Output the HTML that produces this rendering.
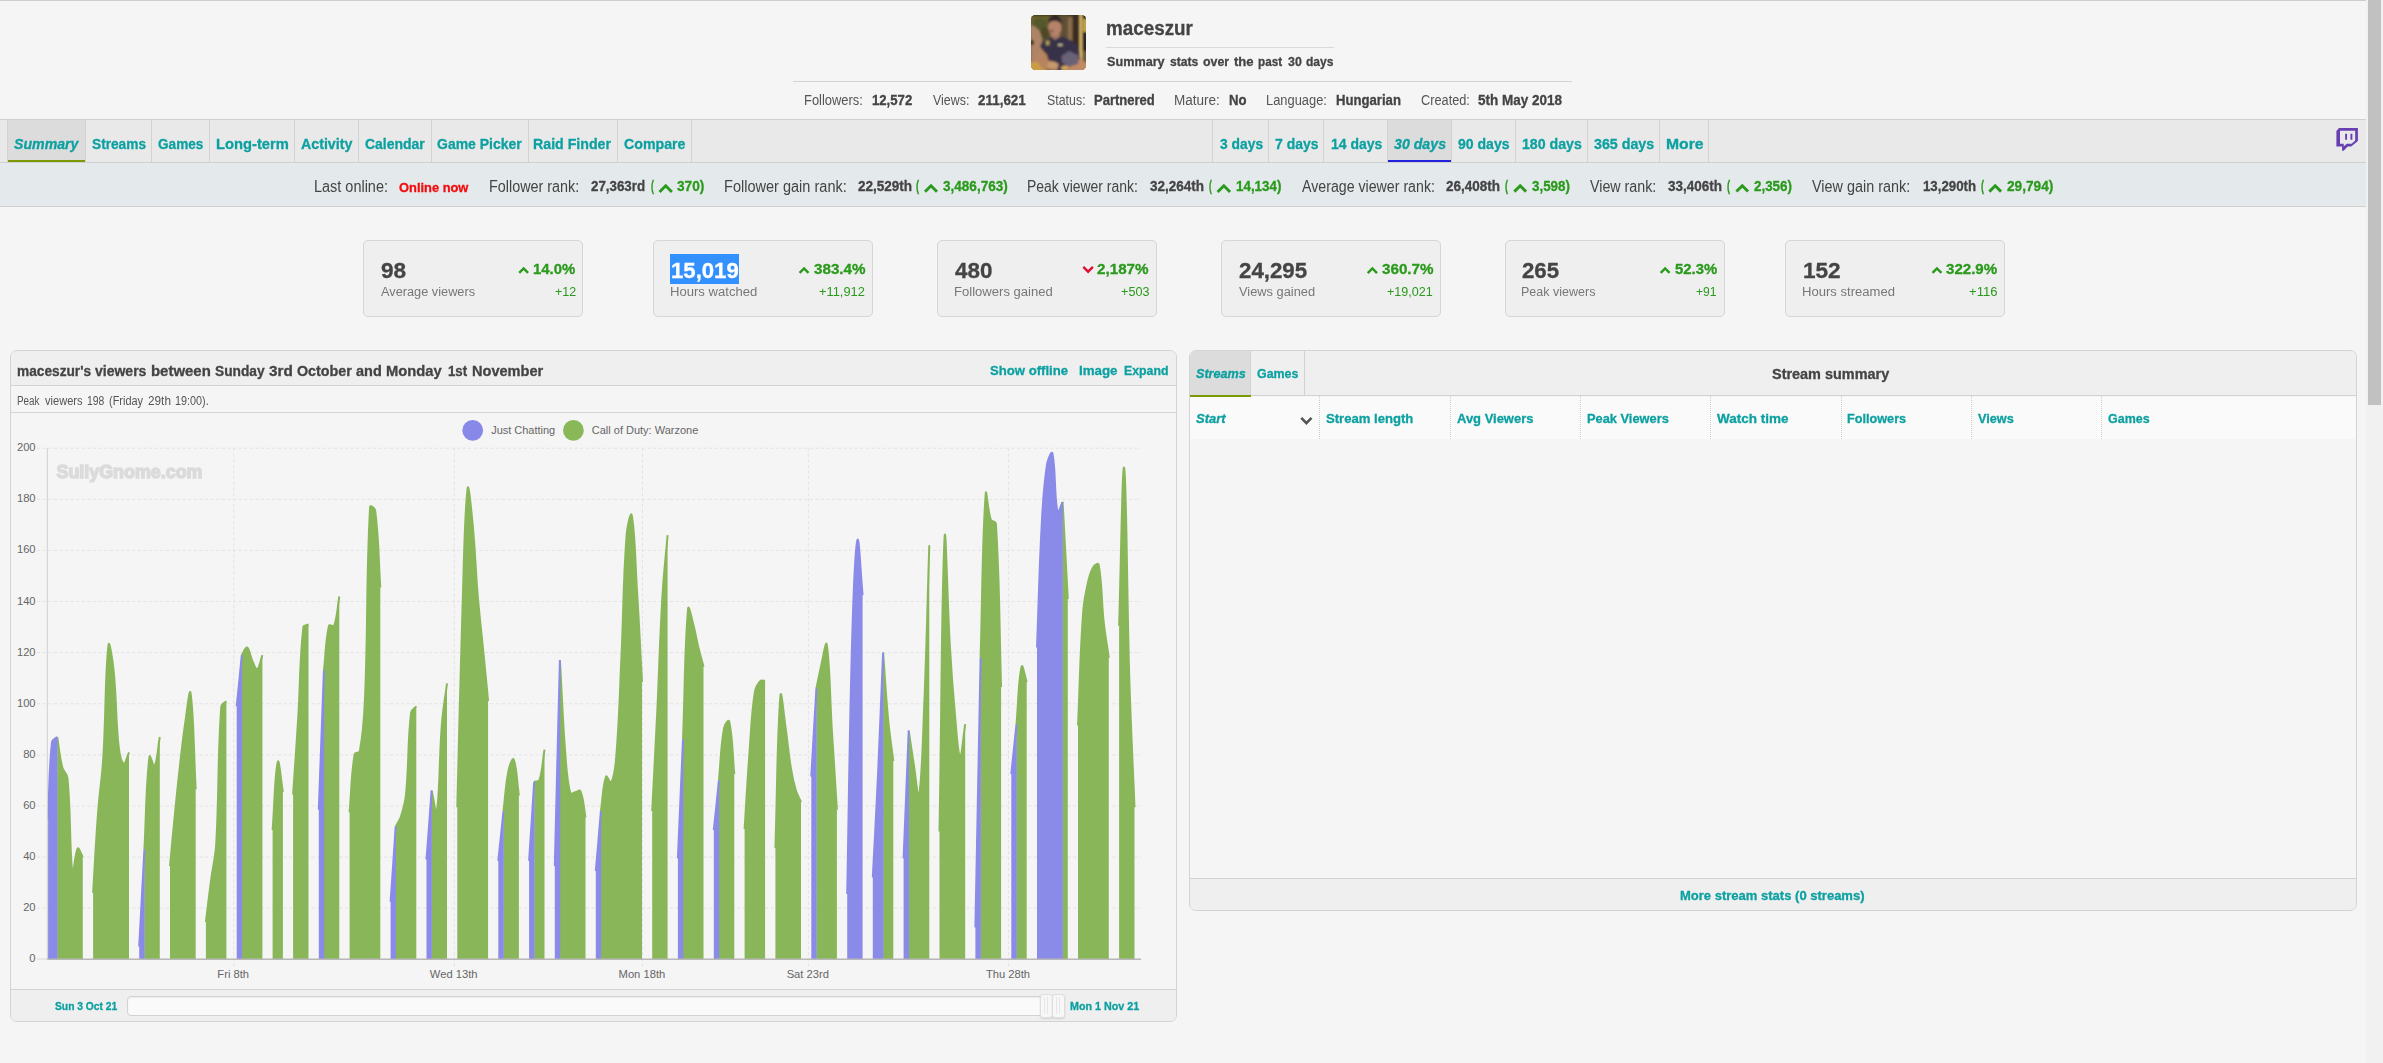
<!DOCTYPE html><html lang="en"><head><meta charset="utf-8"><title>maceszur - Summary stats - SullyGnome</title><style>
html,body{margin:0;padding:0}
body{width:2383px;height:1063px;overflow:hidden;position:relative;background:#f5f5f5;font-family:"Liberation Sans", sans-serif;color:#444}
.b{position:absolute;box-sizing:border-box}
.t{position:absolute;white-space:nowrap;line-height:1;transform-origin:0 0;margin:0;padding:0;text-decoration:none;font-weight:400;display:block}
svg{position:absolute;left:0;top:0;overflow:visible}

</style></head><body>
<div class="b" style="left:0;top:0;width:2366px;height:1px;background:#cdcdcd"></div>
<header>
<div class="b" style="left:1106px;top:47px;width:228px;height:1px;background:#d9d9d9"></div>
<div class="b" style="left:793px;top:81px;width:779px;height:1px;background:#d3d3d3"></div>
</header>
<nav class="b" style="left:0;top:119px;width:2366px;height:44px;background:#e9e9e9;border-top:1px solid #d0d0d0;border-bottom:1px solid #d0d0d0">
<div class="b" style="left:7px;top:0;width:79px;height:42px;background:#dcdcdc"></div>
<div class="b" style="left:7px;top:40px;width:79px;height:2px;background:#7c9a06"></div>
<div class="b" style="left:1388px;top:0;width:64px;height:42px;background:#dcdcdc"></div>
<div class="b" style="left:1388px;top:40px;width:64px;height:2px;background:#2222dd"></div>
<div class="b" style="left:7px;top:0;width:1px;height:42px;background:#d2d2d2"></div>
<div class="b" style="left:85px;top:0;width:1px;height:42px;background:#d2d2d2"></div>
<div class="b" style="left:151px;top:0;width:1px;height:42px;background:#d2d2d2"></div>
<div class="b" style="left:209px;top:0;width:1px;height:42px;background:#d2d2d2"></div>
<div class="b" style="left:294px;top:0;width:1px;height:42px;background:#d2d2d2"></div>
<div class="b" style="left:358px;top:0;width:1px;height:42px;background:#d2d2d2"></div>
<div class="b" style="left:431px;top:0;width:1px;height:42px;background:#d2d2d2"></div>
<div class="b" style="left:528px;top:0;width:1px;height:42px;background:#d2d2d2"></div>
<div class="b" style="left:617px;top:0;width:1px;height:42px;background:#d2d2d2"></div>
<div class="b" style="left:691px;top:0;width:1px;height:42px;background:#d2d2d2"></div>
<div class="b" style="left:1212px;top:0;width:1px;height:42px;background:#d2d2d2"></div>
<div class="b" style="left:1268px;top:0;width:1px;height:42px;background:#d2d2d2"></div>
<div class="b" style="left:1323px;top:0;width:1px;height:42px;background:#d2d2d2"></div>
<div class="b" style="left:1387px;top:0;width:1px;height:42px;background:#d2d2d2"></div>
<div class="b" style="left:1451px;top:0;width:1px;height:42px;background:#d2d2d2"></div>
<div class="b" style="left:1515px;top:0;width:1px;height:42px;background:#d2d2d2"></div>
<div class="b" style="left:1587px;top:0;width:1px;height:42px;background:#d2d2d2"></div>
<div class="b" style="left:1659px;top:0;width:1px;height:42px;background:#d2d2d2"></div>
<div class="b" style="left:1708px;top:0;width:1px;height:42px;background:#d2d2d2"></div>
</nav>
<section class="b" style="left:0;top:163px;width:2366px;height:44px;background:#e4e9ec;border-bottom:1px solid #d0d0d0"></section>
<div class="b" style="left:363px;top:240px;width:220px;height:77px;background:#efefef;border:1px solid #d6d6d6;border-radius:5px"></div>
<div class="b" style="left:653px;top:240px;width:220px;height:77px;background:#efefef;border:1px solid #d6d6d6;border-radius:5px"></div>
<div class="b" style="left:937px;top:240px;width:220px;height:77px;background:#efefef;border:1px solid #d6d6d6;border-radius:5px"></div>
<div class="b" style="left:1221px;top:240px;width:220px;height:77px;background:#efefef;border:1px solid #d6d6d6;border-radius:5px"></div>
<div class="b" style="left:1505px;top:240px;width:220px;height:77px;background:#efefef;border:1px solid #d6d6d6;border-radius:5px"></div>
<div class="b" style="left:1785px;top:240px;width:220px;height:77px;background:#efefef;border:1px solid #d6d6d6;border-radius:5px"></div>
<div class="b" style="left:670px;top:254px;width:69px;height:30px;background:#3390ff"></div>
<section class="b" style="left:10px;top:350px;width:1167px;height:672px;border:1px solid #d3d3d3;border-radius:7px;overflow:hidden">
<div class="b" style="left:0;top:0;width:1165px;height:35px;background:#efefef;border-bottom:1px solid #d3d3d3"></div>
<div class="b" style="left:0;top:61px;width:1165px;height:1px;background:#d3d3d3"></div>
<div class="b" style="left:0;top:638px;width:1165px;height:32px;background:#efefef;border-top:1px solid #d3d3d3"></div>
</section>
<section class="b" style="left:1189px;top:350px;width:1168px;height:561px;border:1px solid #d3d3d3;border-radius:7px;overflow:hidden">
<div class="b" style="left:0;top:0;width:1166px;height:45px;background:#efefef;border-bottom:1px solid #d3d3d3"></div>
<div class="b" style="left:0;top:0;width:61px;height:44px;background:#dcdcdc"></div>
<div class="b" style="left:0;top:44px;width:61px;height:2px;background:#7c9a06"></div>
<div class="b" style="left:60px;top:0;width:1px;height:44px;background:#d2d2d2"></div>
<div class="b" style="left:114px;top:0;width:1px;height:44px;background:#d2d2d2"></div>
<div class="b" style="left:0;top:46px;width:1166px;height:42px;background:#fafafa"></div>
<div class="b" style="left:0;top:44px;width:61px;height:2px;background:#7c9a06"></div>
<div class="b" style="left:129px;top:45px;width:0;height:43px;border-left:1px dotted #cdcdcd"></div>
<div class="b" style="left:260px;top:45px;width:0;height:43px;border-left:1px dotted #cdcdcd"></div>
<div class="b" style="left:390px;top:45px;width:0;height:43px;border-left:1px dotted #cdcdcd"></div>
<div class="b" style="left:520px;top:45px;width:0;height:43px;border-left:1px dotted #cdcdcd"></div>
<div class="b" style="left:651px;top:45px;width:0;height:43px;border-left:1px dotted #cdcdcd"></div>
<div class="b" style="left:781px;top:45px;width:0;height:43px;border-left:1px dotted #cdcdcd"></div>
<div class="b" style="left:911px;top:45px;width:0;height:43px;border-left:1px dotted #cdcdcd"></div>
<div class="b" style="left:0;top:527px;width:1166px;height:33px;background:#efefef;border-top:1px solid #d3d3d3"></div>
</section>
<h1 class="t" style="left:1105.64px;top:19.41px;font-size:19.6px;font-weight:700;font-style:normal;color:#444444;transform:scaleX(0.9613);-webkit-text-stroke:0.3px;">maceszur</h1>
<b class="t" style="left:1106.60px;top:54.64px;font-size:13.3px;font-weight:700;font-style:normal;color:#444444;transform:scaleX(0.9510);-webkit-text-stroke:0.3px;">Summary</b>
<b class="t" style="left:1169.81px;top:54.64px;font-size:13.3px;font-weight:700;font-style:normal;color:#444444;transform:scaleX(0.9078);-webkit-text-stroke:0.3px;">stats</b>
<b class="t" style="left:1202.62px;top:54.64px;font-size:13.3px;font-weight:700;font-style:normal;color:#444444;transform:scaleX(0.9303);-webkit-text-stroke:0.3px;">over</b>
<b class="t" style="left:1233.58px;top:54.64px;font-size:13.3px;font-weight:700;font-style:normal;color:#444444;transform:scaleX(0.9852);-webkit-text-stroke:0.3px;">the</b>
<b class="t" style="left:1257.98px;top:54.64px;font-size:13.3px;font-weight:700;font-style:normal;color:#444444;transform:scaleX(0.8792);-webkit-text-stroke:0.3px;">past</b>
<b class="t" style="left:1287.94px;top:54.64px;font-size:13.3px;font-weight:700;font-style:normal;color:#444444;transform:scaleX(0.9317);-webkit-text-stroke:0.3px;">30</b>
<b class="t" style="left:1306.06px;top:54.64px;font-size:13.3px;font-weight:700;font-style:normal;color:#444444;transform:scaleX(0.9062);-webkit-text-stroke:0.3px;">days</b>
<span class="t" style="left:804.18px;top:93.35px;font-size:14px;font-weight:400;font-style:normal;color:#555555;transform:scaleX(0.9224);">Followers:</span>
<b class="t" style="left:871.70px;top:93.52px;font-size:13.8px;font-weight:700;font-style:normal;color:#444444;transform:scaleX(0.9524);-webkit-text-stroke:0.3px;">12,572</b>
<span class="t" style="left:932.70px;top:93.35px;font-size:14px;font-weight:400;font-style:normal;color:#555555;transform:scaleX(0.8880);">Views:</span>
<b class="t" style="left:977.70px;top:93.52px;font-size:13.8px;font-weight:700;font-style:normal;color:#444444;transform:scaleX(0.9729);-webkit-text-stroke:0.3px;">211,621</b>
<span class="t" style="left:1046.80px;top:93.35px;font-size:14px;font-weight:400;font-style:normal;color:#555555;transform:scaleX(0.8855);">Status:</span>
<b class="t" style="left:1093.50px;top:93.52px;font-size:13.8px;font-weight:700;font-style:normal;color:#444444;transform:scaleX(0.9440);-webkit-text-stroke:0.3px;">Partnered</b>
<span class="t" style="left:1174.33px;top:93.35px;font-size:14px;font-weight:400;font-style:normal;color:#555555;transform:scaleX(0.9655);">Mature:</span>
<b class="t" style="left:1229.00px;top:93.52px;font-size:13.8px;font-weight:700;font-style:normal;color:#444444;transform:scaleX(0.9519);-webkit-text-stroke:0.3px;">No</b>
<span class="t" style="left:1266.38px;top:93.35px;font-size:14px;font-weight:400;font-style:normal;color:#555555;transform:scaleX(0.9208);">Language:</span>
<b class="t" style="left:1336.00px;top:93.52px;font-size:13.8px;font-weight:700;font-style:normal;color:#444444;transform:scaleX(0.9514);-webkit-text-stroke:0.3px;">Hungarian</b>
<span class="t" style="left:1420.60px;top:93.35px;font-size:14px;font-weight:400;font-style:normal;color:#555555;transform:scaleX(0.9109);">Created:</span>
<b class="t" style="left:1478.40px;top:93.52px;font-size:13.8px;font-weight:700;font-style:normal;color:#444444;transform:scaleX(0.9777);-webkit-text-stroke:0.3px;">5th May 2018</b>
<a class="t" style="left:13.80px;top:136.10px;font-size:15px;font-weight:700;font-style:italic;color:#0da0a1;transform:scaleX(0.9432);-webkit-text-stroke:0.3px;">Summary</a>
<a class="t" style="left:92.00px;top:136.10px;font-size:15px;font-weight:700;font-style:normal;color:#0da0a1;transform:scaleX(0.9123);-webkit-text-stroke:0.3px;">Streams</a>
<a class="t" style="left:158.30px;top:136.10px;font-size:15px;font-weight:700;font-style:normal;color:#0da0a1;transform:scaleX(0.9076);-webkit-text-stroke:0.3px;">Games</a>
<a class="t" style="left:215.52px;top:136.10px;font-size:15px;font-weight:700;font-style:normal;color:#0da0a1;transform:scaleX(0.9819);-webkit-text-stroke:0.3px;">Long-term</a>
<a class="t" style="left:300.50px;top:136.10px;font-size:15px;font-weight:700;font-style:normal;color:#0da0a1;transform:scaleX(0.9482);-webkit-text-stroke:0.3px;">Activity</a>
<a class="t" style="left:365.40px;top:136.10px;font-size:15px;font-weight:700;font-style:normal;color:#0da0a1;transform:scaleX(0.9308);-webkit-text-stroke:0.3px;">Calendar</a>
<a class="t" style="left:437.40px;top:136.10px;font-size:15px;font-weight:700;font-style:normal;color:#0da0a1;transform:scaleX(0.9324);-webkit-text-stroke:0.3px;">Game Picker</a>
<a class="t" style="left:533.45px;top:136.10px;font-size:15px;font-weight:700;font-style:normal;color:#0da0a1;transform:scaleX(0.9453);-webkit-text-stroke:0.3px;">Raid Finder</a>
<a class="t" style="left:623.70px;top:136.10px;font-size:15px;font-weight:700;font-style:normal;color:#0da0a1;transform:scaleX(0.9447);-webkit-text-stroke:0.3px;">Compare</a>
<a class="t" style="left:1219.50px;top:136.10px;font-size:15px;font-weight:700;font-style:normal;color:#0da0a1;transform:scaleX(0.9233);-webkit-text-stroke:0.3px;">3 days</a>
<a class="t" style="left:1274.80px;top:136.10px;font-size:15px;font-weight:700;font-style:normal;color:#0da0a1;transform:scaleX(0.9297);-webkit-text-stroke:0.3px;">7 days</a>
<a class="t" style="left:1330.60px;top:136.10px;font-size:15px;font-weight:700;font-style:normal;color:#0da0a1;transform:scaleX(0.9305);-webkit-text-stroke:0.3px;">14 days</a>
<a class="t" style="left:1394.20px;top:136.10px;font-size:15px;font-weight:700;font-style:italic;color:#0da0a1;transform:scaleX(0.9452);-webkit-text-stroke:0.3px;">30 days</a>
<a class="t" style="left:1458.30px;top:136.10px;font-size:15px;font-weight:700;font-style:normal;color:#0da0a1;transform:scaleX(0.9360);-webkit-text-stroke:0.3px;">90 days</a>
<a class="t" style="left:1522.30px;top:136.10px;font-size:15px;font-weight:700;font-style:normal;color:#0da0a1;transform:scaleX(0.9438);-webkit-text-stroke:0.3px;">180 days</a>
<a class="t" style="left:1594.20px;top:136.10px;font-size:15px;font-weight:700;font-style:normal;color:#0da0a1;transform:scaleX(0.9502);-webkit-text-stroke:0.3px;">365 days</a>
<a class="t" style="left:1665.55px;top:136.10px;font-size:15px;font-weight:700;font-style:normal;color:#0da0a1;transform:scaleX(1.0465);-webkit-text-stroke:0.3px;">More</a>
<span class="t" style="left:313.67px;top:178.69px;font-size:15.6px;font-weight:400;font-style:normal;color:#444444;transform:scaleX(0.9273);">Last online:</span>
<b class="t" style="left:399.00px;top:180.64px;font-size:13.3px;font-weight:700;font-style:normal;color:#f20d0d;transform:scaleX(0.9681);-webkit-text-stroke:0.3px;">Online now</b>
<span class="t" style="left:489.18px;top:178.69px;font-size:15.6px;font-weight:400;font-style:normal;color:#444444;transform:scaleX(0.9216);">Follower rank:</span>
<b class="t" style="left:591.30px;top:180.22px;font-size:13.8px;font-weight:700;font-style:normal;color:#444444;transform:scaleX(0.9664);-webkit-text-stroke:0.3px;">27,363rd</b>
<b class="t" style="left:650.50px;top:180.22px;font-size:13.8px;font-weight:700;font-style:normal;color:#2a9a1c;transform:scaleX(0.6400);-webkit-text-stroke:0.3px;">(</b>
<b class="t" style="left:676.90px;top:180.22px;font-size:13.8px;font-weight:700;font-style:normal;color:#2a9a1c;transform:scaleX(0.9882);-webkit-text-stroke:0.3px;">370)</b>
<span class="t" style="left:723.57px;top:178.69px;font-size:15.6px;font-weight:400;font-style:normal;color:#444444;transform:scaleX(0.9319);">Follower gain rank:</span>
<b class="t" style="left:857.60px;top:180.22px;font-size:13.8px;font-weight:700;font-style:normal;color:#444444;transform:scaleX(0.9800);-webkit-text-stroke:0.3px;">22,529th</b>
<b class="t" style="left:916.30px;top:180.22px;font-size:13.8px;font-weight:700;font-style:normal;color:#2a9a1c;transform:scaleX(0.6600);-webkit-text-stroke:0.3px;">(</b>
<b class="t" style="left:942.70px;top:180.22px;font-size:13.8px;font-weight:700;font-style:normal;color:#2a9a1c;transform:scaleX(0.9820);-webkit-text-stroke:0.3px;">3,486,763)</b>
<span class="t" style="left:1027.41px;top:178.69px;font-size:15.6px;font-weight:400;font-style:normal;color:#444444;transform:scaleX(0.8947);">Peak viewer rank:</span>
<b class="t" style="left:1150.20px;top:180.22px;font-size:13.8px;font-weight:700;font-style:normal;color:#444444;transform:scaleX(0.9782);-webkit-text-stroke:0.3px;">32,264th</b>
<b class="t" style="left:1209.10px;top:180.22px;font-size:13.8px;font-weight:700;font-style:normal;color:#2a9a1c;transform:scaleX(0.6200);-webkit-text-stroke:0.3px;">(</b>
<b class="t" style="left:1235.80px;top:180.22px;font-size:13.8px;font-weight:700;font-style:normal;color:#2a9a1c;transform:scaleX(0.9697);-webkit-text-stroke:0.3px;">14,134)</b>
<span class="t" style="left:1302.00px;top:178.69px;font-size:15.6px;font-weight:400;font-style:normal;color:#444444;transform:scaleX(0.9092);">Average viewer rank:</span>
<b class="t" style="left:1446.30px;top:180.22px;font-size:13.8px;font-weight:700;font-style:normal;color:#444444;transform:scaleX(0.9764);-webkit-text-stroke:0.3px;">26,408th</b>
<b class="t" style="left:1505.30px;top:180.22px;font-size:13.8px;font-weight:700;font-style:normal;color:#2a9a1c;transform:scaleX(0.6600);-webkit-text-stroke:0.3px;">(</b>
<b class="t" style="left:1531.60px;top:180.22px;font-size:13.8px;font-weight:700;font-style:normal;color:#2a9a1c;transform:scaleX(0.9708);-webkit-text-stroke:0.3px;">3,598)</b>
<span class="t" style="left:1590.30px;top:178.69px;font-size:15.6px;font-weight:400;font-style:normal;color:#444444;transform:scaleX(0.9145);">View rank:</span>
<b class="t" style="left:1668.40px;top:180.22px;font-size:13.8px;font-weight:700;font-style:normal;color:#444444;transform:scaleX(0.9764);-webkit-text-stroke:0.3px;">33,406th</b>
<b class="t" style="left:1726.90px;top:180.22px;font-size:13.8px;font-weight:700;font-style:normal;color:#2a9a1c;transform:scaleX(0.6600);-webkit-text-stroke:0.3px;">(</b>
<b class="t" style="left:1753.70px;top:180.22px;font-size:13.8px;font-weight:700;font-style:normal;color:#2a9a1c;transform:scaleX(0.9708);-webkit-text-stroke:0.3px;">2,356)</b>
<span class="t" style="left:1811.90px;top:178.69px;font-size:15.6px;font-weight:400;font-style:normal;color:#444444;transform:scaleX(0.9229);">View gain rank:</span>
<b class="t" style="left:1922.70px;top:180.22px;font-size:13.8px;font-weight:700;font-style:normal;color:#444444;transform:scaleX(0.9600);-webkit-text-stroke:0.3px;">13,290th</b>
<b class="t" style="left:1980.90px;top:180.22px;font-size:13.8px;font-weight:700;font-style:normal;color:#2a9a1c;transform:scaleX(0.6600);-webkit-text-stroke:0.3px;">(</b>
<b class="t" style="left:2006.60px;top:180.22px;font-size:13.8px;font-weight:700;font-style:normal;color:#2a9a1c;transform:scaleX(0.9892);-webkit-text-stroke:0.3px;">29,794)</b>
<b class="t" style="left:380.80px;top:259.58px;font-size:22px;font-weight:700;font-style:normal;color:#444444;transform:scaleX(1.0274);-webkit-text-stroke:0.3px;">98</b>
<span class="t" style="left:380.80px;top:286.22px;font-size:12.5px;font-weight:400;font-style:normal;color:#777777;transform:scaleX(1.0204);">Average viewers</span>
<b class="t" style="left:533.10px;top:262.34px;font-size:14.6px;font-weight:700;font-style:normal;color:#2a9a1c;transform:scaleX(1.0192);-webkit-text-stroke:0.3px;">14.0%</b>
<span class="t" style="left:554.70px;top:286.22px;font-size:12.5px;font-weight:400;font-style:normal;color:#2a9a1c;transform:scaleX(1.0023);">+12</span>
<b class="t" style="left:670.79px;top:259.58px;font-size:22px;font-weight:700;font-style:normal;color:#ffffff;transform:scaleX(1.0068);-webkit-text-stroke:0.3px;">15,019</b>
<span class="t" style="left:669.85px;top:286.22px;font-size:12.5px;font-weight:400;font-style:normal;color:#777777;transform:scaleX(1.0470);">Hours watched</span>
<b class="t" style="left:813.50px;top:262.34px;font-size:14.6px;font-weight:700;font-style:normal;color:#2a9a1c;transform:scaleX(1.0420);-webkit-text-stroke:0.3px;">383.4%</b>
<span class="t" style="left:819.20px;top:286.22px;font-size:12.5px;font-weight:400;font-style:normal;color:#2a9a1c;transform:scaleX(1.0279);">+11,912</span>
<b class="t" style="left:954.60px;top:259.58px;font-size:22px;font-weight:700;font-style:normal;color:#444444;transform:scaleX(1.0200);-webkit-text-stroke:0.3px;">480</b>
<span class="t" style="left:953.55px;top:286.22px;font-size:12.5px;font-weight:400;font-style:normal;color:#777777;transform:scaleX(1.0455);">Followers gained</span>
<b class="t" style="left:1097.10px;top:262.34px;font-size:14.6px;font-weight:700;font-style:normal;color:#2a9a1c;transform:scaleX(1.0420);-webkit-text-stroke:0.3px;">2,187%</b>
<span class="t" style="left:1120.60px;top:286.22px;font-size:12.5px;font-weight:400;font-style:normal;color:#2a9a1c;transform:scaleX(1.0105);">+503</span>
<b class="t" style="left:1238.60px;top:259.58px;font-size:22px;font-weight:700;font-style:normal;color:#444444;transform:scaleX(1.0126);-webkit-text-stroke:0.3px;">24,295</b>
<span class="t" style="left:1238.60px;top:286.22px;font-size:12.5px;font-weight:400;font-style:normal;color:#777777;transform:scaleX(1.0273);">Views gained</span>
<b class="t" style="left:1381.50px;top:262.34px;font-size:14.6px;font-weight:700;font-style:normal;color:#2a9a1c;transform:scaleX(1.0420);-webkit-text-stroke:0.3px;">360.7%</b>
<span class="t" style="left:1387.30px;top:286.22px;font-size:12.5px;font-weight:400;font-style:normal;color:#2a9a1c;transform:scaleX(1.0048);">+19,021</span>
<b class="t" style="left:1522.30px;top:259.58px;font-size:22px;font-weight:700;font-style:normal;color:#444444;transform:scaleX(1.0090);-webkit-text-stroke:0.3px;">265</b>
<span class="t" style="left:1521.30px;top:286.22px;font-size:12.5px;font-weight:400;font-style:normal;color:#777777;transform:scaleX(1.0016);">Peak viewers</span>
<b class="t" style="left:1674.60px;top:262.34px;font-size:14.6px;font-weight:700;font-style:normal;color:#2a9a1c;transform:scaleX(1.0192);-webkit-text-stroke:0.3px;">52.3%</b>
<span class="t" style="left:1696.20px;top:286.22px;font-size:12.5px;font-weight:400;font-style:normal;color:#2a9a1c;transform:scaleX(0.9693);">+91</span>
<b class="t" style="left:1802.77px;top:259.58px;font-size:22px;font-weight:700;font-style:normal;color:#444444;transform:scaleX(1.0262);-webkit-text-stroke:0.3px;">152</b>
<span class="t" style="left:1801.95px;top:286.22px;font-size:12.5px;font-weight:400;font-style:normal;color:#777777;transform:scaleX(1.0458);">Hours streamed</span>
<b class="t" style="left:1946.30px;top:262.34px;font-size:14.6px;font-weight:700;font-style:normal;color:#2a9a1c;transform:scaleX(1.0339);-webkit-text-stroke:0.3px;">322.9%</b>
<span class="t" style="left:1969.40px;top:286.22px;font-size:12.5px;font-weight:400;font-style:normal;color:#2a9a1c;transform:scaleX(1.0449);">+116</span>
<b class="t" style="left:16.87px;top:363.95px;font-size:14px;font-weight:700;font-style:normal;color:#444444;transform:scaleX(0.9783);-webkit-text-stroke:0.3px;">maceszur&#x27;s</b>
<b class="t" style="left:95.17px;top:363.95px;font-size:14px;font-weight:700;font-style:normal;color:#444444;transform:scaleX(1.0006);-webkit-text-stroke:0.3px;">viewers</b>
<b class="t" style="left:151.07px;top:363.95px;font-size:14px;font-weight:700;font-style:normal;color:#444444;transform:scaleX(1.0668);-webkit-text-stroke:0.3px;">between</b>
<b class="t" style="left:214.52px;top:363.95px;font-size:14px;font-weight:700;font-style:normal;color:#444444;transform:scaleX(0.9818);-webkit-text-stroke:0.3px;">Sunday</b>
<b class="t" style="left:268.90px;top:363.95px;font-size:14px;font-weight:700;font-style:normal;color:#444444;transform:scaleX(1.0909);-webkit-text-stroke:0.3px;">3rd</b>
<b class="t" style="left:296.60px;top:363.95px;font-size:14px;font-weight:700;font-style:normal;color:#444444;transform:scaleX(1.0215);-webkit-text-stroke:0.3px;">October</b>
<b class="t" style="left:356.27px;top:363.95px;font-size:14px;font-weight:700;font-style:normal;color:#444444;transform:scaleX(1.0345);-webkit-text-stroke:0.3px;">and</b>
<b class="t" style="left:386.48px;top:363.95px;font-size:14px;font-weight:700;font-style:normal;color:#444444;transform:scaleX(1.0526);-webkit-text-stroke:0.3px;">Monday</b>
<b class="t" style="left:447.67px;top:363.95px;font-size:14px;font-weight:700;font-style:normal;color:#444444;transform:scaleX(0.9424);-webkit-text-stroke:0.3px;">1st</b>
<b class="t" style="left:472.09px;top:363.95px;font-size:14px;font-weight:700;font-style:normal;color:#444444;transform:scaleX(1.0397);-webkit-text-stroke:0.3px;">November</b>
<a class="t" style="left:989.80px;top:363.80px;font-size:13px;font-weight:700;font-style:normal;color:#0da0a1;transform:scaleX(1.0099);-webkit-text-stroke:0.3px;">Show offline</a>
<a class="t" style="left:1079.20px;top:363.80px;font-size:13px;font-weight:700;font-style:normal;color:#0da0a1;transform:scaleX(1.0257);-webkit-text-stroke:0.3px;">Image</a>
<a class="t" style="left:1123.80px;top:363.80px;font-size:13px;font-weight:700;font-style:normal;color:#0da0a1;transform:scaleX(0.9466);-webkit-text-stroke:0.3px;">Expand</a>
<span class="t" style="left:17.30px;top:394.64px;font-size:12px;font-weight:400;font-style:normal;color:#555555;transform:scaleX(0.8215);">Peak</span>
<span class="t" style="left:45.25px;top:394.64px;font-size:12px;font-weight:400;font-style:normal;color:#555555;transform:scaleX(0.9224);">viewers</span>
<span class="t" style="left:87.43px;top:394.64px;font-size:12px;font-weight:400;font-style:normal;color:#555555;transform:scaleX(0.8662);">198</span>
<span class="t" style="left:109.46px;top:394.64px;font-size:12px;font-weight:400;font-style:normal;color:#555555;transform:scaleX(0.9104);">(Friday</span>
<span class="t" style="left:147.86px;top:394.64px;font-size:12px;font-weight:400;font-style:normal;color:#555555;transform:scaleX(0.9825);">29th</span>
<span class="t" style="left:174.93px;top:394.64px;font-size:12px;font-weight:400;font-style:normal;color:#555555;transform:scaleX(0.9011);">19:00).</span>
<b class="t" style="left:55.40px;top:1001.39px;font-size:11px;font-weight:700;font-style:normal;color:#0da0a1;transform:scaleX(0.9351);-webkit-text-stroke:0.3px;">Sun 3 Oct 21</b>
<b class="t" style="left:1069.80px;top:1001.39px;font-size:11px;font-weight:700;font-style:normal;color:#0da0a1;transform:scaleX(0.9762);-webkit-text-stroke:0.3px;">Mon 1 Nov 21</b>
<a class="t" style="left:1195.60px;top:366.96px;font-size:13.4px;font-weight:700;font-style:italic;color:#0da0a1;transform:scaleX(0.9427);-webkit-text-stroke:0.3px;">Streams</a>
<a class="t" style="left:1257.30px;top:366.96px;font-size:13.4px;font-weight:700;font-style:normal;color:#0da0a1;transform:scaleX(0.9273);-webkit-text-stroke:0.3px;">Games</a>
<h3 class="t" style="left:1771.50px;top:366.58px;font-size:14.2px;font-weight:700;font-style:normal;color:#444444;transform:scaleX(1.0178);-webkit-text-stroke:0.3px;">Stream summary</h3>
<a class="t" style="left:1195.60px;top:411.76px;font-size:13.4px;font-weight:700;font-style:italic;color:#0da0a1;transform:scaleX(0.9727);-webkit-text-stroke:0.3px;">Start</a>
<a class="t" style="left:1326.00px;top:411.76px;font-size:13.4px;font-weight:700;font-style:normal;color:#0da0a1;transform:scaleX(0.9786);-webkit-text-stroke:0.3px;">Stream length</a>
<a class="t" style="left:1456.50px;top:411.76px;font-size:13.4px;font-weight:700;font-style:normal;color:#0da0a1;transform:scaleX(0.9688);-webkit-text-stroke:0.3px;">Avg Viewers</a>
<a class="t" style="left:1586.60px;top:411.76px;font-size:13.4px;font-weight:700;font-style:normal;color:#0da0a1;transform:scaleX(0.9585);-webkit-text-stroke:0.3px;">Peak Viewers</a>
<a class="t" style="left:1717.10px;top:411.76px;font-size:13.4px;font-weight:700;font-style:normal;color:#0da0a1;transform:scaleX(1.0074);-webkit-text-stroke:0.3px;">Watch time</a>
<a class="t" style="left:1847.30px;top:411.76px;font-size:13.4px;font-weight:700;font-style:normal;color:#0da0a1;transform:scaleX(0.9460);-webkit-text-stroke:0.3px;">Followers</a>
<a class="t" style="left:1977.90px;top:411.76px;font-size:13.4px;font-weight:700;font-style:normal;color:#0da0a1;transform:scaleX(0.9498);-webkit-text-stroke:0.3px;">Views</a>
<a class="t" style="left:2108.20px;top:411.76px;font-size:13.4px;font-weight:700;font-style:normal;color:#0da0a1;transform:scaleX(0.9318);-webkit-text-stroke:0.3px;">Games</a>
<a class="t" style="left:1680.30px;top:888.60px;font-size:13px;font-weight:700;font-style:normal;color:#0da0a1;transform:scaleX(1.0015);-webkit-text-stroke:0.3px;">More stream stats (0 streams)</a>
<svg width="2383" height="1063" viewBox="0 0 2383 1063">
<path d="M659.52 191.93 L665.70 185.75 L671.88 191.93" fill="none" stroke="#2a9a1c" stroke-width="2.9" stroke-linejoin="miter"/>
<path d="M925.02 191.73 L931.00 185.75 L936.98 191.73" fill="none" stroke="#2a9a1c" stroke-width="2.9" stroke-linejoin="miter"/>
<path d="M1217.62 191.98 L1223.85 185.75 L1230.07 191.98" fill="none" stroke="#2a9a1c" stroke-width="2.9" stroke-linejoin="miter"/>
<path d="M1514.32 191.63 L1520.20 185.75 L1526.07 191.63" fill="none" stroke="#2a9a1c" stroke-width="2.9" stroke-linejoin="miter"/>
<path d="M1736.42 191.58 L1742.25 185.75 L1748.08 191.58" fill="none" stroke="#2a9a1c" stroke-width="2.9" stroke-linejoin="miter"/>
<path d="M1989.32 191.63 L1995.20 185.75 L2001.07 191.63" fill="none" stroke="#2a9a1c" stroke-width="2.9" stroke-linejoin="miter"/>
<path d="M519.20 272.95 L523.65 268.50 L528.10 272.95" fill="none" stroke="#2a9a1c" stroke-width="2.4" stroke-linejoin="miter"/>
<path d="M799.60 272.95 L804.05 268.50 L808.50 272.95" fill="none" stroke="#2a9a1c" stroke-width="2.4" stroke-linejoin="miter"/>
<path d="M1083.30 266.90 L1088.10 271.70 L1092.90 266.90" fill="none" stroke="#dd1133" stroke-width="2.4" stroke-linejoin="miter"/>
<path d="M1367.70 273.15 L1372.35 268.50 L1377.00 273.15" fill="none" stroke="#2a9a1c" stroke-width="2.4" stroke-linejoin="miter"/>
<path d="M1660.70 272.95 L1665.15 268.50 L1669.60 272.95" fill="none" stroke="#2a9a1c" stroke-width="2.4" stroke-linejoin="miter"/>
<path d="M1932.50 272.95 L1936.95 268.50 L1941.40 272.95" fill="none" stroke="#2a9a1c" stroke-width="2.4" stroke-linejoin="miter"/>
</svg>
<svg width="2383" height="1063" viewBox="0 0 2383 1063" font-family="Liberation Sans, sans-serif">
<defs><filter id="wb" x="-5%" y="-30%" width="110%" height="160%"><feGaussianBlur stdDeviation="0.75"/></filter><clipPath id="ca"><rect x="47.3" y="446" width="1094" height="514"/></clipPath></defs>
<path d="M37 908.2H1141M37 857.1H1141M37 806.0H1141M37 754.9H1141M37 703.8H1141M37 652.6H1141M37 601.5H1141M37 550.4H1141M37 499.3H1141M37 448.2H1141M233.8 448V969M454.3 448V969M642.5 448V969M808.4 448V969M1008.6 448V969" stroke="#e3e3e3" stroke-width="1" stroke-dasharray="3.2 2.4" fill="none"/>
<path d="M37 959H47" stroke="#dadada" stroke-width="1" fill="none"/>
<text x="56.5" y="478" font-size="18.8" font-weight="700" fill="#dbdbdb" stroke="#dbdbdb" stroke-width="1.5" textLength="146" lengthAdjust="spacingAndGlyphs" filter="url(#wb)">SullyGnome.com</text>
<g clip-path="url(#ca)">
<path d="M57.2 737.0C59.2 749.2 59.3 755.7 62.3 767.6C63.4 772.0 67.0 773.3 67.4 777.9C71.1 815.8 69.3 851.3 72.5 873.7C73.4 879.6 74.7 853.4 77.7 848.6C78.8 846.8 80.8 853.7 82.8 857.1L82.8 857.1 L82.8 959.3 L57.2 959.3 ZM93.1 892.9C95.1 860.1 95.7 843.8 98.2 811.1C99.8 789.6 102.0 778.9 103.3 757.4C106.1 712.5 105.1 673.2 108.5 645.0C109.2 638.4 112.6 660.2 113.6 670.5C116.7 701.1 115.4 716.8 118.7 747.2C119.5 754.1 121.5 762.6 123.8 763.8C125.6 764.7 126.9 756.9 129.0 752.3L129.0 752.3 L129.0 959.3 L93.1 959.3 ZM144.4 849.4C146.4 812.3 145.8 786.4 149.5 756.6C149.9 753.1 153.5 768.5 154.6 766.4C157.6 760.6 157.7 748.7 159.8 737.0L159.8 737.0 L159.8 959.3 L144.4 959.3 ZM170.0 866.0C172.1 844.0 173.0 833.0 175.2 811.1C177.1 791.6 178.1 781.9 180.3 762.5C182.2 746.2 183.0 737.9 185.4 721.6C187.1 710.1 189.6 686.7 190.5 693.0C193.7 713.8 193.6 750.8 195.7 789.4L195.7 789.4 L195.7 959.3 L170.0 959.3 ZM205.9 922.2C208.0 905.4 208.8 896.9 211.1 880.1C212.9 865.7 215.3 858.7 216.2 844.3C219.4 789.2 217.4 760.7 221.3 706.3C221.5 703.5 224.4 703.2 226.4 701.2L226.4 701.2 L226.4 959.3 L205.9 959.3 ZM241.8 655.2C243.9 652.1 245.3 646.7 247.0 647.5C249.4 648.8 249.8 655.3 252.1 660.3C253.9 664.0 255.6 670.1 257.2 669.3C259.7 668.0 260.3 660.8 262.4 655.2L262.4 655.2 L262.4 959.3 L241.8 959.3 ZM272.6 830.2C274.7 803.0 274.9 772.6 277.8 762.0C279.0 757.3 280.8 780.0 282.9 791.9L282.9 791.9 L282.9 959.3 L272.6 959.3 ZM293.1 794.5C295.2 763.3 296.4 747.7 298.3 716.5C300.5 680.8 299.5 661.7 303.4 627.1C303.6 624.9 306.5 625.6 308.5 624.5L308.5 624.5 L308.5 959.3 L293.1 959.3 ZM323.9 670.5C326.0 652.6 325.4 641.9 329.0 625.8C329.5 624.0 333.6 627.5 334.2 625.8C337.7 615.8 337.3 608.2 339.3 596.4L339.3 596.4 L339.3 959.3 L323.9 959.3 ZM349.6 812.4C351.6 789.1 351.0 776.3 354.7 754.1C355.1 751.9 359.4 753.7 359.8 751.5C363.5 731.5 364.1 719.9 365.0 698.6C368.2 622.0 366.1 579.7 370.1 507.0C370.2 504.5 374.9 508.3 375.2 510.8C379.0 540.5 378.3 556.8 380.3 587.5L380.3 587.5 L380.3 959.3 L349.6 959.3 ZM395.7 826.4C397.8 822.5 399.5 820.9 400.9 816.7C403.6 808.1 405.1 803.5 406.0 794.5C409.2 761.9 407.4 744.8 411.1 712.7C411.5 709.5 414.2 708.9 416.3 706.3L416.3 706.3 L416.3 959.3 L395.7 959.3 ZM431.6 790.6C433.7 799.3 436.0 817.7 436.8 812.4C440.1 791.1 439.1 759.4 441.9 724.2C443.2 707.8 445.0 699.7 447.0 683.3L447.0 683.3 L447.0 959.3 L431.6 959.3 ZM457.3 807.2C459.4 729.0 459.9 689.9 462.4 611.8C464.0 562.5 464.4 515.4 467.6 488.6C468.5 480.6 471.3 510.3 472.7 524.9C475.4 553.4 475.4 567.8 477.8 596.4C479.5 616.9 480.9 627.1 482.9 647.5C485.1 669.0 486.0 679.7 488.1 701.2L488.1 701.2 L488.1 959.3 L457.3 959.3 ZM503.5 811.1C505.5 794.7 505.4 786.2 508.6 770.2C509.5 765.6 512.7 757.0 513.7 759.5C516.8 767.2 516.8 781.2 518.9 795.7L518.9 795.7 L518.9 959.3 L503.5 959.3 ZM534.2 781.7C536.3 781.2 538.8 782.3 539.4 780.4C542.9 769.5 542.5 762.0 544.5 749.7L544.5 749.7 L544.5 959.3 L534.2 959.3 ZM559.9 660.3C562.0 696.1 562.3 714.0 565.0 749.7C566.4 767.2 566.5 778.0 570.2 793.2C570.6 795.0 573.2 792.6 575.3 792.2C577.3 791.8 579.8 789.5 580.4 791.1C583.9 799.6 583.5 806.9 585.5 817.5L585.5 817.5 L585.5 959.3 L559.9 959.3 ZM600.9 811.1C603.0 797.3 602.7 785.7 606.1 776.6C606.9 774.4 610.3 784.9 611.2 783.0C614.4 776.7 615.5 767.0 616.3 756.1C619.6 715.9 619.6 695.6 621.5 655.2C623.7 607.2 623.1 582.9 626.6 535.1C627.2 526.9 630.8 510.5 631.7 515.2C634.9 531.5 635.1 558.5 636.8 587.5C639.2 625.3 639.9 644.2 642.0 682.0L642.0 682.0 L642.0 959.3 L600.9 959.3 ZM652.2 811.1C654.3 770.2 655.4 749.8 657.4 708.9C659.5 663.4 659.8 640.6 662.5 595.1C663.9 571.1 665.6 559.1 667.6 535.1L667.6 535.1 L667.6 959.3 L652.2 959.3 ZM683.0 739.5C685.1 687.2 684.5 649.5 688.1 608.7C688.6 603.5 691.6 618.1 693.3 624.5C695.7 633.6 696.2 638.4 698.4 647.5C700.3 655.2 701.5 659.0 703.5 666.7L703.5 666.7 L703.5 959.3 L683.0 959.3 ZM718.9 780.4C721.0 759.5 720.5 748.4 724.1 728.0C724.6 724.8 728.6 718.9 729.2 721.4C732.7 737.3 732.3 753.0 734.3 774.0L734.3 774.0 L734.3 959.3 L718.9 959.3 ZM744.6 829.0C746.6 797.3 747.3 781.4 749.7 749.7C751.4 726.7 751.4 714.9 754.8 692.3C755.6 687.5 757.1 684.5 760.0 681.3C761.2 679.9 763.0 681.0 765.1 680.8L765.1 680.8 L765.1 959.3 L744.6 959.3 ZM775.4 848.1C777.4 787.1 777.1 735.1 780.5 695.6C781.2 687.1 783.8 715.0 785.6 728.0C787.9 743.8 788.2 751.9 790.8 767.6C792.3 776.9 793.2 781.6 795.9 790.6C797.3 795.4 799.0 797.5 801.0 802.1L801.0 802.1 L801.0 959.3 L775.4 959.3 ZM816.4 688.4C818.5 678.7 819.3 673.8 821.5 664.1C823.4 656.2 825.9 639.4 826.7 644.5C830.0 665.5 829.7 695.4 831.8 729.3C833.8 761.5 834.9 777.6 836.9 809.8L836.9 809.8 L836.9 959.3 L816.4 959.3 ZM883.1 652.6C885.1 679.7 885.7 693.3 888.2 720.4C889.8 736.8 891.3 744.9 893.3 761.2L893.3 761.2 L893.3 959.3 L883.1 959.3 ZM908.7 730.6C910.8 744.4 911.7 751.3 913.9 765.1C915.8 777.6 917.9 802.2 919.0 796.3C922.0 779.7 922.7 743.8 924.1 708.9C926.8 643.5 927.2 610.7 929.3 545.3L929.3 545.3 L929.3 959.3 L908.7 959.3 ZM939.5 831.5C941.6 714.0 941.6 592.3 944.6 537.6C945.7 517.7 947.3 602.1 949.8 645.0C951.4 672.6 952.4 686.4 954.9 714.0C956.5 731.0 957.7 754.1 960.0 756.4C961.8 758.2 963.1 737.1 965.2 724.2L965.2 724.2 L965.2 959.3 L939.5 959.3 ZM980.6 657.8C982.6 592.1 982.2 541.2 985.7 493.7C986.3 486.0 987.5 510.1 990.8 519.8C991.6 522.1 995.8 521.1 995.9 523.6C999.9 588.0 999.0 621.7 1001.1 687.1L1001.1 687.1 L1001.1 959.3 L980.6 959.3 ZM1016.5 724.2C1018.5 701.2 1018.4 679.9 1021.6 666.7C1022.5 663.0 1024.7 675.9 1026.7 682.0L1026.7 682.0 L1026.7 959.3 L1016.5 959.3 ZM1062.6 501.9C1064.7 540.7 1065.7 560.1 1067.8 599.0L1067.8 599.0 L1067.8 959.3 L1062.6 959.3 ZM1078.0 725.5C1080.1 680.0 1079.9 657.1 1083.2 611.8C1084.0 599.4 1085.5 593.2 1088.3 581.1C1089.6 575.3 1090.5 571.8 1093.4 567.0C1094.6 565.2 1098.2 562.5 1098.6 564.5C1102.3 584.5 1101.2 599.0 1103.7 622.0C1105.3 636.3 1106.8 643.4 1108.8 657.8L1108.8 657.8 L1108.8 959.3 L1078.0 959.3 ZM1119.1 625.8C1121.1 562.7 1122.4 459.1 1124.2 468.1C1126.5 480.1 1126.8 594.2 1129.3 678.2C1130.9 729.8 1132.4 755.6 1134.5 807.2L1134.5 807.2 L1134.5 959.3 L1119.1 959.3 Z" fill="#8ab65a"/>
<path d="M57.2 737.0C59.2 749.2 59.3 755.7 62.3 767.6C63.4 772.0 67.0 773.3 67.4 777.9C71.1 815.8 69.3 851.3 72.5 873.7C73.4 879.6 74.7 853.4 77.7 848.6C78.8 846.8 80.8 853.7 82.8 857.1M93.1 892.9C95.1 860.1 95.7 843.8 98.2 811.1C99.8 789.6 102.0 778.9 103.3 757.4C106.1 712.5 105.1 673.2 108.5 645.0C109.2 638.4 112.6 660.2 113.6 670.5C116.7 701.1 115.4 716.8 118.7 747.2C119.5 754.1 121.5 762.6 123.8 763.8C125.6 764.7 126.9 756.9 129.0 752.3M144.4 849.4C146.4 812.3 145.8 786.4 149.5 756.6C149.9 753.1 153.5 768.5 154.6 766.4C157.6 760.6 157.7 748.7 159.8 737.0M170.0 866.0C172.1 844.0 173.0 833.0 175.2 811.1C177.1 791.6 178.1 781.9 180.3 762.5C182.2 746.2 183.0 737.9 185.4 721.6C187.1 710.1 189.6 686.7 190.5 693.0C193.7 713.8 193.6 750.8 195.7 789.4M205.9 922.2C208.0 905.4 208.8 896.9 211.1 880.1C212.9 865.7 215.3 858.7 216.2 844.3C219.4 789.2 217.4 760.7 221.3 706.3C221.5 703.5 224.4 703.2 226.4 701.2M241.8 655.2C243.9 652.1 245.3 646.7 247.0 647.5C249.4 648.8 249.8 655.3 252.1 660.3C253.9 664.0 255.6 670.1 257.2 669.3C259.7 668.0 260.3 660.8 262.4 655.2M272.6 830.2C274.7 803.0 274.9 772.6 277.8 762.0C279.0 757.3 280.8 780.0 282.9 791.9M293.1 794.5C295.2 763.3 296.4 747.7 298.3 716.5C300.5 680.8 299.5 661.7 303.4 627.1C303.6 624.9 306.5 625.6 308.5 624.5M323.9 670.5C326.0 652.6 325.4 641.9 329.0 625.8C329.5 624.0 333.6 627.5 334.2 625.8C337.7 615.8 337.3 608.2 339.3 596.4M349.6 812.4C351.6 789.1 351.0 776.3 354.7 754.1C355.1 751.9 359.4 753.7 359.8 751.5C363.5 731.5 364.1 719.9 365.0 698.6C368.2 622.0 366.1 579.7 370.1 507.0C370.2 504.5 374.9 508.3 375.2 510.8C379.0 540.5 378.3 556.8 380.3 587.5M395.7 826.4C397.8 822.5 399.5 820.9 400.9 816.7C403.6 808.1 405.1 803.5 406.0 794.5C409.2 761.9 407.4 744.8 411.1 712.7C411.5 709.5 414.2 708.9 416.3 706.3M431.6 790.6C433.7 799.3 436.0 817.7 436.8 812.4C440.1 791.1 439.1 759.4 441.9 724.2C443.2 707.8 445.0 699.7 447.0 683.3M457.3 807.2C459.4 729.0 459.9 689.9 462.4 611.8C464.0 562.5 464.4 515.4 467.6 488.6C468.5 480.6 471.3 510.3 472.7 524.9C475.4 553.4 475.4 567.8 477.8 596.4C479.5 616.9 480.9 627.1 482.9 647.5C485.1 669.0 486.0 679.7 488.1 701.2M503.5 811.1C505.5 794.7 505.4 786.2 508.6 770.2C509.5 765.6 512.7 757.0 513.7 759.5C516.8 767.2 516.8 781.2 518.9 795.7M534.2 781.7C536.3 781.2 538.8 782.3 539.4 780.4C542.9 769.5 542.5 762.0 544.5 749.7M559.9 660.3C562.0 696.1 562.3 714.0 565.0 749.7C566.4 767.2 566.5 778.0 570.2 793.2C570.6 795.0 573.2 792.6 575.3 792.2C577.3 791.8 579.8 789.5 580.4 791.1C583.9 799.6 583.5 806.9 585.5 817.5M600.9 811.1C603.0 797.3 602.7 785.7 606.1 776.6C606.9 774.4 610.3 784.9 611.2 783.0C614.4 776.7 615.5 767.0 616.3 756.1C619.6 715.9 619.6 695.6 621.5 655.2C623.7 607.2 623.1 582.9 626.6 535.1C627.2 526.9 630.8 510.5 631.7 515.2C634.9 531.5 635.1 558.5 636.8 587.5C639.2 625.3 639.9 644.2 642.0 682.0M652.2 811.1C654.3 770.2 655.4 749.8 657.4 708.9C659.5 663.4 659.8 640.6 662.5 595.1C663.9 571.1 665.6 559.1 667.6 535.1M683.0 739.5C685.1 687.2 684.5 649.5 688.1 608.7C688.6 603.5 691.6 618.1 693.3 624.5C695.7 633.6 696.2 638.4 698.4 647.5C700.3 655.2 701.5 659.0 703.5 666.7M718.9 780.4C721.0 759.5 720.5 748.4 724.1 728.0C724.6 724.8 728.6 718.9 729.2 721.4C732.7 737.3 732.3 753.0 734.3 774.0M744.6 829.0C746.6 797.3 747.3 781.4 749.7 749.7C751.4 726.7 751.4 714.9 754.8 692.3C755.6 687.5 757.1 684.5 760.0 681.3C761.2 679.9 763.0 681.0 765.1 680.8M775.4 848.1C777.4 787.1 777.1 735.1 780.5 695.6C781.2 687.1 783.8 715.0 785.6 728.0C787.9 743.8 788.2 751.9 790.8 767.6C792.3 776.9 793.2 781.6 795.9 790.6C797.3 795.4 799.0 797.5 801.0 802.1M816.4 688.4C818.5 678.7 819.3 673.8 821.5 664.1C823.4 656.2 825.9 639.4 826.7 644.5C830.0 665.5 829.7 695.4 831.8 729.3C833.8 761.5 834.9 777.6 836.9 809.8M883.1 652.6C885.1 679.7 885.7 693.3 888.2 720.4C889.8 736.8 891.3 744.9 893.3 761.2M908.7 730.6C910.8 744.4 911.7 751.3 913.9 765.1C915.8 777.6 917.9 802.2 919.0 796.3C922.0 779.7 922.7 743.8 924.1 708.9C926.8 643.5 927.2 610.7 929.3 545.3M939.5 831.5C941.6 714.0 941.6 592.3 944.6 537.6C945.7 517.7 947.3 602.1 949.8 645.0C951.4 672.6 952.4 686.4 954.9 714.0C956.5 731.0 957.7 754.1 960.0 756.4C961.8 758.2 963.1 737.1 965.2 724.2M980.6 657.8C982.6 592.1 982.2 541.2 985.7 493.7C986.3 486.0 987.5 510.1 990.8 519.8C991.6 522.1 995.8 521.1 995.9 523.6C999.9 588.0 999.0 621.7 1001.1 687.1M1016.5 724.2C1018.5 701.2 1018.4 679.9 1021.6 666.7C1022.5 663.0 1024.7 675.9 1026.7 682.0M1062.6 501.9C1064.7 540.7 1065.7 560.1 1067.8 599.0M1078.0 725.5C1080.1 680.0 1079.9 657.1 1083.2 611.8C1084.0 599.4 1085.5 593.2 1088.3 581.1C1089.6 575.3 1090.5 571.8 1093.4 567.0C1094.6 565.2 1098.2 562.5 1098.6 564.5C1102.3 584.5 1101.2 599.0 1103.7 622.0C1105.3 636.3 1106.8 643.4 1108.8 657.8M1119.1 625.8C1121.1 562.7 1122.4 459.1 1124.2 468.1C1126.5 480.1 1126.8 594.2 1129.3 678.2C1130.9 729.8 1132.4 755.6 1134.5 807.2" fill="none" stroke="#8ab65a" stroke-width="2"/>
<path d="M48.1 818.7C49.7 788.1 48.7 772.0 52.0 742.1C52.3 739.3 55.1 739.0 57.2 737.0L57.5 737.0 L57.5 959.3 L48.1 959.3 ZM139.2 946.5C141.3 907.7 142.3 888.3 144.4 849.4L144.7 849.4 L144.7 959.3 L139.2 959.3 ZM236.7 706.3C238.8 685.9 239.8 675.6 241.8 655.2L242.1 655.2 L242.1 959.3 L236.7 959.3 ZM318.8 809.8C320.8 754.1 321.9 726.2 323.9 670.5L324.2 670.5 L324.2 959.3 L318.8 959.3 ZM390.6 901.8C392.7 871.6 393.7 856.6 395.7 826.4L396.0 826.4 L396.0 959.3 L390.6 959.3 ZM426.5 859.6C428.6 832.0 429.6 818.2 431.6 790.6L431.9 790.6 L431.9 959.3 L426.5 959.3 ZM498.3 860.9C500.4 841.0 501.4 831.0 503.5 811.1L503.8 811.1 L503.8 959.3 L498.3 959.3 ZM529.1 860.9C531.2 829.2 532.2 813.4 534.2 781.7L534.5 781.7 L534.5 959.3 L529.1 959.3 ZM554.8 866.0C556.8 783.7 557.8 742.6 559.9 660.3L560.2 660.3 L560.2 959.3 L554.8 959.3 ZM595.8 871.1C597.9 847.1 598.9 835.1 600.9 811.1L601.2 811.1 L601.2 959.3 L595.8 959.3 ZM677.9 858.4C679.9 810.8 681.0 787.1 683.0 739.5L683.3 739.5 L683.3 959.3 L677.9 959.3 ZM713.8 830.2C715.9 810.3 716.9 800.3 718.9 780.4L719.2 780.4 L719.2 959.3 L713.8 959.3 ZM811.3 776.6C813.3 741.3 814.3 723.7 816.4 688.4L816.7 688.4 L816.7 959.3 L811.3 959.3 ZM847.2 894.1C849.2 790.4 849.3 738.5 852.3 634.8C853.4 596.9 854.8 550.2 857.4 540.2C859.0 534.4 860.5 573.2 862.6 595.1L862.6 595.1 L862.6 959.3 L847.2 959.3 ZM872.8 877.5C874.9 836.6 876.1 816.2 878.0 775.3C880.2 726.2 881.0 701.7 883.1 652.6L883.4 652.6 L883.4 959.3 L872.8 959.3 ZM903.6 858.4C905.7 807.2 906.7 781.7 908.7 730.6L909.0 730.6 L909.0 959.3 L903.6 959.3 ZM975.4 927.4C977.5 819.5 978.5 765.6 980.6 657.8L980.9 657.8 L980.9 959.3 L975.4 959.3 ZM1011.3 774.0C1013.4 754.1 1014.4 744.1 1016.5 724.2L1016.8 724.2 L1016.8 959.3 L1011.3 959.3 ZM1037.0 647.5C1039.0 595.4 1039.2 569.3 1042.1 517.2C1043.3 495.7 1043.9 484.6 1047.2 463.5C1048.0 459.1 1051.7 450.2 1052.4 453.3C1055.8 469.6 1054.1 495.8 1057.5 512.1C1058.2 515.2 1060.6 506.0 1062.6 501.9L1062.9 501.9 L1062.9 959.3 L1037.0 959.3 Z" fill="#8a8ae8"/>
<path d="M48.1 818.7C49.7 788.1 48.7 772.0 52.0 742.1C52.3 739.3 55.1 739.0 57.2 737.0M139.2 946.5C141.3 907.7 142.3 888.3 144.4 849.4M236.7 706.3C238.8 685.9 239.8 675.6 241.8 655.2M318.8 809.8C320.8 754.1 321.9 726.2 323.9 670.5M390.6 901.8C392.7 871.6 393.7 856.6 395.7 826.4M426.5 859.6C428.6 832.0 429.6 818.2 431.6 790.6M498.3 860.9C500.4 841.0 501.4 831.0 503.5 811.1M529.1 860.9C531.2 829.2 532.2 813.4 534.2 781.7M554.8 866.0C556.8 783.7 557.8 742.6 559.9 660.3M595.8 871.1C597.9 847.1 598.9 835.1 600.9 811.1M677.9 858.4C679.9 810.8 681.0 787.1 683.0 739.5M713.8 830.2C715.9 810.3 716.9 800.3 718.9 780.4M811.3 776.6C813.3 741.3 814.3 723.7 816.4 688.4M847.2 894.1C849.2 790.4 849.3 738.5 852.3 634.8C853.4 596.9 854.8 550.2 857.4 540.2C859.0 534.4 860.5 573.2 862.6 595.1M872.8 877.5C874.9 836.6 876.1 816.2 878.0 775.3C880.2 726.2 881.0 701.7 883.1 652.6M903.6 858.4C905.7 807.2 906.7 781.7 908.7 730.6M975.4 927.4C977.5 819.5 978.5 765.6 980.6 657.8M1011.3 774.0C1013.4 754.1 1014.4 744.1 1016.5 724.2M1037.0 647.5C1039.0 595.4 1039.2 569.3 1042.1 517.2C1043.3 495.7 1043.9 484.6 1047.2 463.5C1048.0 459.1 1051.7 450.2 1052.4 453.3C1055.8 469.6 1054.1 495.8 1057.5 512.1C1058.2 515.2 1060.6 506.0 1062.6 501.9" fill="none" stroke="#8a8ae8" stroke-width="2"/>
</g>
<path d="M47.3 448V959" stroke="#cfcfcf" stroke-width="1" fill="none"/>
<path d="M47 959.3H1141" stroke="#b8b8b8" stroke-width="1.6" fill="none"/>
<text x="35.6" y="962.3" font-size="11.2" fill="#666" text-anchor="end">0</text>
<text x="35.6" y="911.2" font-size="11.2" fill="#666" text-anchor="end">20</text>
<text x="35.6" y="860.1" font-size="11.2" fill="#666" text-anchor="end">40</text>
<text x="35.6" y="809.0" font-size="11.2" fill="#666" text-anchor="end">60</text>
<text x="35.6" y="757.9" font-size="11.2" fill="#666" text-anchor="end">80</text>
<text x="35.6" y="706.8" font-size="11.2" fill="#666" text-anchor="end">100</text>
<text x="35.6" y="655.6" font-size="11.2" fill="#666" text-anchor="end">120</text>
<text x="35.6" y="604.5" font-size="11.2" fill="#666" text-anchor="end">140</text>
<text x="35.6" y="553.4" font-size="11.2" fill="#666" text-anchor="end">160</text>
<text x="35.6" y="502.3" font-size="11.2" fill="#666" text-anchor="end">180</text>
<text x="35.6" y="451.2" font-size="11.2" fill="#666" text-anchor="end">200</text>
<text x="233.2" y="977.7" font-size="11.2" fill="#666" text-anchor="middle">Fri 8th</text>
<text x="453.7" y="977.7" font-size="11.2" fill="#666" text-anchor="middle">Wed 13th</text>
<text x="641.9" y="977.7" font-size="11.2" fill="#666" text-anchor="middle">Mon 18th</text>
<text x="807.8" y="977.7" font-size="11.2" fill="#666" text-anchor="middle">Sat 23rd</text>
<text x="1008.0" y="977.7" font-size="11.2" fill="#666" text-anchor="middle">Thu 28th</text>
<circle cx="472.7" cy="430.4" r="10.4" fill="#8888e8"/>
<text x="491.2" y="434.1" font-size="11.2" fill="#666" textLength="64" lengthAdjust="spacingAndGlyphs">Just Chatting</text>
<circle cx="573.4" cy="430.4" r="10.4" fill="#88b858"/>
<text x="591.8" y="434.1" font-size="11.2" fill="#666" textLength="106.5" lengthAdjust="spacingAndGlyphs">Call of Duty: Warzone</text>
</svg>
<div class="b" style="left:127px;top:996px;width:920px;height:20px;background:#fafafa;border:1px solid #d2d2d2;border-radius:4px;box-shadow:inset 0 1px 2px rgba(0,0,0,.06)"></div>
<div class="b" style="left:1040px;top:994px;width:13px;height:24px;background:#f7f7f7;border:1px solid #dedede;border-radius:3px;box-shadow:0 1px 2px rgba(0,0,0,.12)"><i class="b" style="left:3px;top:2px;width:1px;height:17px;background:#e6e6e6"></i><i class="b" style="left:6px;top:2px;width:1px;height:17px;background:#e6e6e6"></i></div>
<div class="b" style="left:1052px;top:994px;width:13px;height:24px;background:#f7f7f7;border:1px solid #dedede;border-radius:3px;box-shadow:0 1px 2px rgba(0,0,0,.12)"><i class="b" style="left:3px;top:2px;width:1px;height:17px;background:#e6e6e6"></i><i class="b" style="left:6px;top:2px;width:1px;height:17px;background:#e6e6e6"></i></div>
<svg width="2383" height="1063" viewBox="0 0 2383 1063"><path d="M1301.3 417.8L1306.4 423.2L1311.5 417.8" fill="none" stroke="#555" stroke-width="2.6"/>
<path fill-rule="evenodd" fill="#673fb2" d="M2339 127.9H2357.9V140.9L2351.2 146.5H2347.7L2343.7 150.8H2342.1V146.5H2336.4V131ZM2340 130.7V143.7H2343.7V146.3L2346.9 143.7H2351.6L2355.2 140.5V130.7Z"/>
<path d="M2346.1 133.8V139.7M2351.4 133.8V139.7" stroke="#673fb2" stroke-width="1.9" fill="none"/>
</svg>
<svg style="left:1031px;top:15px" width="55" height="55" viewBox="0 0 55 55"><defs><clipPath id="ac"><rect width="55" height="55" rx="4.5"/></clipPath><filter id="ab" x="-10%" y="-10%" width="120%" height="120%"><feGaussianBlur stdDeviation="0.9"/></filter></defs>
<g clip-path="url(#ac)"><rect width="55" height="55" fill="#6e5a3c"/><g filter="url(#ab)">
<rect x="-3" y="-3" width="34" height="30" fill="#67622f"/><rect x="-3" y="-3" width="62" height="4" fill="#3c3018"/>
<ellipse cx="9" cy="9" rx="7" ry="6" fill="#55582a"/><ellipse cx="14" cy="18" rx="5" ry="6" fill="#4e4a28"/>
<rect x="30" y="0" width="8" height="40" fill="#5e5034"/><rect x="37" y="3" width="4.5" height="34" fill="#8c6e4c"/>
<rect x="41.5" y="0" width="7" height="46" fill="#3a2a24"/><rect x="48.5" y="-2" width="3" height="52" fill="#dcbc6c"/>
<rect x="51.5" y="0" width="6" height="36" fill="#2c2222"/><rect x="52" y="4" width="4" height="13" fill="#c4a448"/>
<path d="M0 10Q9 12 11 24L9 46L0 50Z" fill="#ad8468"/><rect x="-1" y="25" width="4" height="5" fill="#4c3a2a"/>
<rect x="-2" y="47" width="20" height="10" fill="#cc9c44"/><rect x="36" y="48" width="22" height="9" fill="#d0a04a"/>
<path d="M20 20L28 19L31 24L20 25Z" fill="#a87860"/>
<ellipse cx="23.8" cy="12.5" rx="6.6" ry="8.6" fill="#b5826a"/>
<path d="M16.8 9Q16.5 1 24 0.6Q31.5 1 30.6 9.5Q28 5.5 23 6Q19 6 16.8 9Z" fill="#35262a"/>
<rect x="18.5" y="15.4" width="4" height="1.3" fill="#5a3c34"/>
<path d="M9 31Q13 23 21 22L24 25L30 21Q42 25 47 31L49.5 44L40 47L38 56H15L17 42L11 44Z" fill="#37304a"/>
<path d="M9 32L16 40L17 45L28 49L26 56L11 54L5 44Z" fill="#b7845e"/>
<path d="M41 47L49.5 44L56 48L56 58L37 56Z" fill="#c08a64"/>
<path d="M30.5 41L38 36L48 40.5L47 49L37 52L31 47Z" fill="#6b6274"/>
<ellipse cx="21.5" cy="50" rx="5.5" ry="3.6" fill="#c49a6c"/><ellipse cx="34" cy="53" rx="4" ry="2.6" fill="#d0a458"/>
<rect x="15" y="25.5" width="3.4" height="4.6" fill="#b8a04c"/><rect x="27" y="29" width="4.6" height="1.8" fill="#cfc69a"/>
</g></g></svg>
<div class="b" style="left:2366px;top:0;width:17px;height:1063px;background:#f1f1f1"></div>
<div class="b" style="left:2368px;top:0;width:13px;height:405px;background:#c1c1c1"></div>
</body></html>
